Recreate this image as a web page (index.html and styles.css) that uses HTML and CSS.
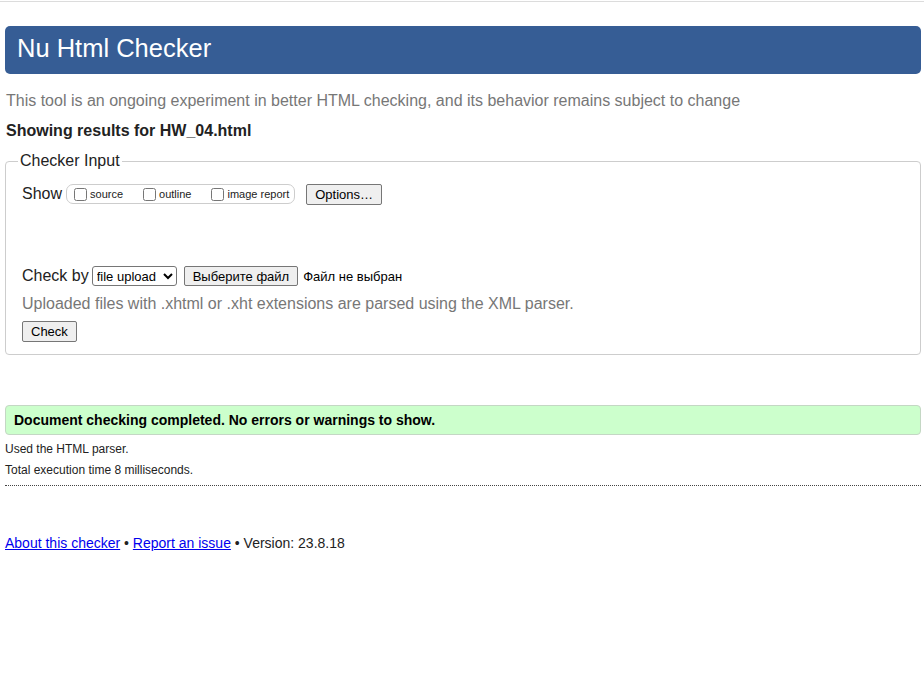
FILE: index.html
```html
<!DOCTYPE html>
<html lang="en">
<head>
<meta charset="utf-8">
<title>Nu Html Checker</title>
<link rel="stylesheet" href="styles.css">
</head>
<body>
<div class="topline"></div>
<div class="page">
  <h1 class="banner">Nu Html Checker</h1>
  <p class="intro">This tool is an ongoing experiment in better HTML checking, and its behavior remains subject to change</p>
  <h2 class="results-title">Showing results for HW_04.html</h2>
  <fieldset class="input-box">
    <legend class="input-legend">Checker Input</legend>
    <div class="show-row">
      <span class="row-label">Show</span>
      <span class="check-group">
        <label class="check-item"><input type="checkbox" class="cb"><span>source</span></label>
        <label class="check-item"><input type="checkbox" class="cb"><span>outline</span></label>
        <label class="check-item last"><input type="checkbox" class="cb"><span>image report</span></label>
      </span>
      <button class="btn btn-options" type="button">Options…</button>
    </div>
    <div class="checkby-row">
      <span class="row-label">Check by</span>
      <select class="by-select"><option>file upload</option></select>
      <button class="btn btn-file" type="button">Выберите файл</button>
      <span class="file-status">Файл не выбран</span>
    </div>
    <p class="note">Uploaded files with .xhtml or .xht extensions are parsed using the XML parser.</p>
    <div class="submit-row"><button class="btn btn-check" type="submit">Check</button></div>
  </fieldset>
  <div class="success">Document checking completed. No errors or warnings to show.</div>
  <div class="details">
    <p class="detail-line">Used the HTML parser.</p>
    <p class="detail-line">Total execution time 8 milliseconds.</p>
  </div>
  <p class="footer"><a href="#">About this checker</a> • <a href="#">Report an issue</a> • Version: 23.8.18</p>
</div>
</body>
</html>
```

FILE: styles.css
```css
html, body {
  margin: 0;
  padding: 0;
  background: #fff;
}
body {
  font-family: "Liberation Sans", Arial, sans-serif;
  color: #222;
  font-size: 16px;
}
.topline {
  margin-top: 1px;
  height: 1px;
  background: #dcdcdc;
}
.page {
  margin: 0 3px 0 5px;
}
.banner {
  margin: 24px 0 0;
  height: 48px;
  box-sizing: border-box;
  padding: 0 0 4px 12px;
  line-height: 44px;
  font-size: 25.5px;
  font-weight: normal;
  color: #fff;
  background: #365d95;
  border-radius: 5px;
}
.intro {
  margin: 18px 0 0;
  padding-left: 1px;
  line-height: 18px;
  color: #777;
}
.results-title {
  margin: 12px 0 0;
  padding-left: 1px;
  font-size: 16px;
  line-height: 18px;
  font-weight: bold;
  color: #222;
}
.input-box {
  margin: 12px 0 0;
  padding: 0 12px 12px 16px;
  border: 1px solid #cdcdcd;
  border-radius: 4px;
}
.input-legend {
  margin-left: -4px;
  padding: 0 2px;
  line-height: 18px;
  color: #222;
}
.show-row {
  display: flex;
  align-items: center;
  height: 22px;
  margin-top: 13px;
}
.row-label {
  line-height: 18px;
  color: #222;
}
.check-group {
  display: inline-flex;
  align-items: center;
  height: 18px;
  margin-left: 4px;
  padding: 0 5px 0 3px;
  border: 1px solid #cdcdcd;
  border-radius: 7px;
  font-size: 11px;
}
.check-item {
  display: inline-flex;
  align-items: center;
  margin-right: 16px;
}
.check-item.last {
  margin-right: 0;
}
.cb {
  width: 13px;
  height: 13px;
  margin: 0 3px 0 4px;
}
.btn {
  font-family: "Liberation Sans", Arial, sans-serif;
  font-size: 13px;
  line-height: 15px;
  height: 21px;
  padding: 2px 8px;
  color: #000;
  background: #efefef;
  border: 1px solid #767676;
  border-radius: 2px;
}
.btn-options {
  margin-left: 11px;
}
.checkby-row {
  display: flex;
  align-items: center;
  height: 22px;
  margin-top: 60px;
}
.by-select {
  margin-left: 3px;
  width: 85px;
  height: 20px;
  font-family: "Liberation Sans", Arial, sans-serif;
  font-size: 13px;
  color: #000;
  background: #fff;
  border: 1px solid #767676;
  border-radius: 3px;
}
.btn-file {
  margin-left: 7px;
  height: 20px;
  padding: 1px 8px;
}
.file-status {
  margin-left: 5px;
  font-size: 13px;
  color: #000;
}
.note {
  margin: 8px 0 0;
  line-height: 18px;
  color: #777;
}
.submit-row {
  margin-top: 8px;
  display: flex;
}
.success {
  margin-top: 50px;
  padding: 6px 8px;
  line-height: 16px;
  font-size: 14px;
  font-weight: bold;
  color: #000;
  background: #ccffcc;
  border: 1px solid #c4d7c4;
  border-radius: 4px;
}
.details {
  padding-bottom: 8px;
  border-bottom: 1px dotted #444;
}
.detail-line {
  margin: 7px 0 0;
  font-size: 12px;
  line-height: 14px;
  color: #222;
}
.footer {
  margin: 49px 0 0;
  font-size: 14px;
  line-height: 16px;
  color: #222;
}
.footer a {
  color: #0000ee;
}
```
